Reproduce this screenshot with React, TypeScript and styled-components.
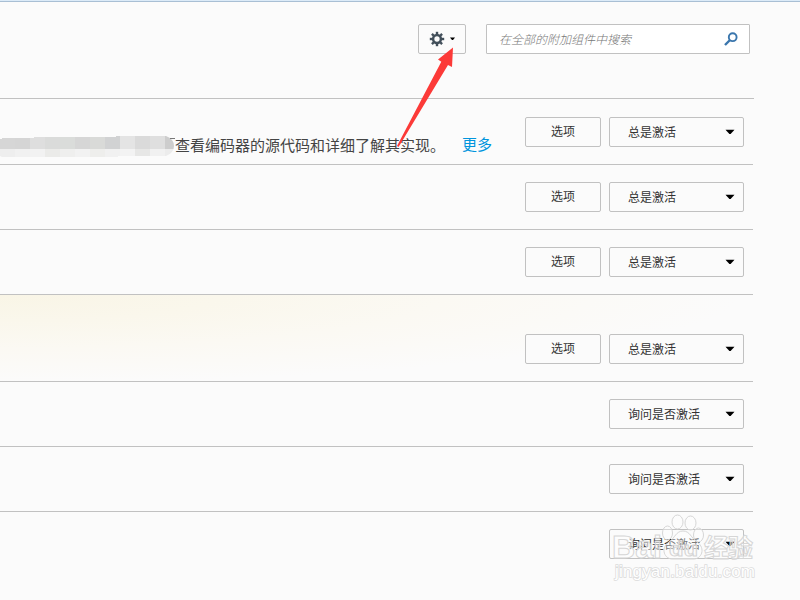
import React from 'react';
import styled, { createGlobalStyle } from 'styled-components';

const Global = createGlobalStyle`
  * { box-sizing: border-box; }
  body { margin: 0; background: #fbfbfb; overflow: hidden; }
`;

const Page = styled.main`
  position: relative;
  width: 800px;
  height: 600px;
  overflow: hidden;
  background: #fbfbfb;
  border-top: 1px solid #dcebf8;
  color: #333;
  font: 12px/16px "Noto Sans CJK SC", sans-serif;
`;

const Header = styled.header`
  width: 754px;
  height: 97px;
  display: flex;
  justify-content: flex-end;
  gap: 20px;
  padding: 22px 4px 0 0;
  border-bottom: 1px solid #c1c1c1;
`;

const WindowEdge = styled.div`
  height: 1px;
  background: #a9bfd4;
`;

const Box = styled.button`
  display: flex;
  align-items: center;
  flex: none;
  height: 30px;
  padding: 0;
  border: 1px solid #c1c1c1;
  border-radius: 2px;
  background: #fbfbfb;
  color: #333;
  font: inherit;
`;

const ToolsButton = styled(Box)`
  width: 48px;
  padding-left: 10px;
  gap: 5px;
`;

const OptionsButton = styled(Box)`
  width: 76px;
  justify-content: center;
  padding: 0 0 2px 0;
`;

const StateSelect = styled(Box)`
  width: 135px;
  justify-content: space-between;
  padding: 0 8px 0 18px;
`;

const Search = styled.label`
  display: flex;
  align-items: center;
  justify-content: space-between;
  width: 264px;
  height: 30px;
  padding: 0 11px 1px 12px;
  border: 1px solid #c1c1c1;
  border-radius: 1px;
  background: #fff;
  color: #777;
  font-style: italic;
  font-weight: 300;
`;

const Row = styled.section<{ $height: number; $last?: boolean; $warm?: boolean }>`
  display: flex;
  align-items: flex-end;
  justify-content: flex-end;
  gap: 8px;
  width: 753px;
  height: ${p => p.$height}px;
  padding: 0 9px 17px 0;
  border-bottom: 1px solid ${p => (p.$last ? 'transparent' : '#c1c1c1')};
  background: ${p => p.$warm ? 'radial-gradient(ellipse 740px 88px at 0 0, #f9f5e6 0%, #faf7ec 30%, #fbf9f3 60%, #fbfbfb 100%)' : 'none'};
`;

const Description = styled.div`
  display: flex;
  align-items: center;
  flex: 1;
  height: 22px;
  margin-bottom: -9px;
  font-size: 15px;
  line-height: 22px;
  white-space: nowrap;
  color: #444;
`;

const Redaction = styled.svg`
  flex: none;
  width: 175px;
  height: 24px;
`;

const More = styled.a`
  margin: -2px 0 0 17px;
  color: #0095dd;
`;

const Arrow = styled.svg`
  position: absolute;
  left: 395px;
  top: 46px;
  width: 64px;
  height: 102px;
`;

const Watermark = styled.svg`
  position: absolute;
  left: 605px;
  top: 508px;
  width: 155px;
  height: 78px;
`;

const Caret = () => (
  <svg width="10" height="6" viewBox="0 0 10 6"><path d="M.5.8h9L5.6 5H4.4z" fill="#000" /></svg>
);

const Gear = () => (
  <svg width="16" height="16" viewBox="-8 -8 16 16" fill="none" stroke="#424f5a">
    <circle r="3.9" strokeWidth="2.5" />
    {[0, 45, 90, 135, 180, 225, 270, 315].map(a => (
      <path key={a} d="M0-4.6V-7.2" strokeWidth="2.4" transform={`rotate(${a})`} />
    ))}
  </svg>
);

const upper = ['#d6d6d6', '#d5d5d5', '#dedede', '#dadbda', '#dadcda', '#d6d6d6', '#d9dad8', '#d1d2d3', '#e4e4e4', '#dadada', '#dfdfdf', '#cdcdcd'];
const lower = ['#eeeeee', '#f1f1f1', '#f2f2f2', '#ebebe9', '#efefee', '#f2f2f2', '#eeeeec', '#f1f1f1', '#f3f3f3', '#e7e7e6', '#f1f1f1', '#ececec'];
const blocks = [0, 15, 30, 45, 60, 75, 90, 105, 120, 135, 150, 165];

const rows = [
  { height: 66, options: true, label: '总是激活', described: true },
  { height: 65, options: true, label: '总是激活' },
  { height: 65, options: true, label: '总是激活' },
  { height: 87, options: true, label: '总是激活', warm: true },
  { height: 65, label: '询问是否激活' },
  { height: 65, label: '询问是否激活' },
  { height: 65, label: '询问是否激活', last: true },
];

export default function App() {
  return (
    <Page>
      <Global />
      <WindowEdge />
      <Header>
        <ToolsButton aria-label="工具">
          <Gear />
          <svg width="5" height="4" viewBox="0 0 5 4"><path d="M0 .5h5L3 3H2z" /></svg>
        </ToolsButton>
        <Search>
          在全部的附加组件中搜索
          <svg width="14" height="14" viewBox="0 0 14 14" fill="none" stroke="#3a76ad">
            <circle cx="8.7" cy="5.2" r="3.9" strokeWidth="1.9" />
            <path d="M6 8 1 13" strokeWidth="2.4" />
          </svg>
        </Search>
      </Header>
      {rows.map((row, i) => (
        <Row key={i} $height={row.height} $warm={row.warm} $last={row.last}>
          {row.described && (
            <Description>
              <Redaction viewBox="0 0 175 24">
                <clipPath id="stroke"><path d="M0 6H2V5H34V4H116V3H166Q174 6 174 13T166 23H118V24H2L0 23z" /></clipPath>
                <g clipPath="url(#stroke)">
                  {blocks.map((x, n) => (
                    <g key={x}>
                      <rect x={x} width="15" height="16" fill={upper[n]} />
                      <rect x={x} y="16" width="15" height="9" fill={lower[n]} />
                    </g>
                  ))}
                </g>
                <path d="M170 5.500H175" stroke="#777" />
              </Redaction>
              查看编码器的源代码和详细了解其实现。
              <More>更多</More>
            </Description>
          )}
          {row.options && <OptionsButton>选项</OptionsButton>}
          <StateSelect>{row.label}<Caret /></StateSelect>
        </Row>
      ))}
      <Arrow viewBox="395 47 64 102">
        <path d="M453 47.500 452 67 448 65 401 143 398.500 147 397 146 441.300 61.800 438 59.500z" fill="#fc3a38" />
      </Arrow>
      <Watermark viewBox="605 509 155 78" fill="#fff" fillOpacity=".55" stroke="#d6d6d6" fontFamily="Liberation Sans, sans-serif">
        <text x="612" y="558" fontSize="32" fontWeight="700" textLength="50" lengthAdjust="spacingAndGlyphs">Bai</text>
        <g fillOpacity=".35">
          <ellipse cx="677.500" cy="522" rx="5.500" ry="7" />
          <ellipse cx="690.500" cy="523" rx="5.500" ry="7" />
          <ellipse cx="667.500" cy="533" rx="5" ry="7" />
          <ellipse cx="698.500" cy="535" rx="5" ry="7" />
          <path d="M683 531C676 531 675 538 669 542C660 548 664 560 674 559H692C702 560 706 548 697 542C691 538 690 531 683 531z" />
        </g>
        <text x="669" y="556" fontSize="20" fontWeight="700" textLength="29" lengthAdjust="spacingAndGlyphs" fillOpacity=".3">du</text>
        <text x="704" y="557" fontSize="25" fontWeight="700" fontFamily="Noto Sans CJK SC, sans-serif" textLength="49">经验</text>
        <text x="615" y="577" fontSize="17" textLength="140" fillOpacity="1" stroke="#dcdcdc" strokeWidth="1.6" paintOrder="stroke">jingyan.baidu.com</text>
      </Watermark>
    </Page>
  );
}
